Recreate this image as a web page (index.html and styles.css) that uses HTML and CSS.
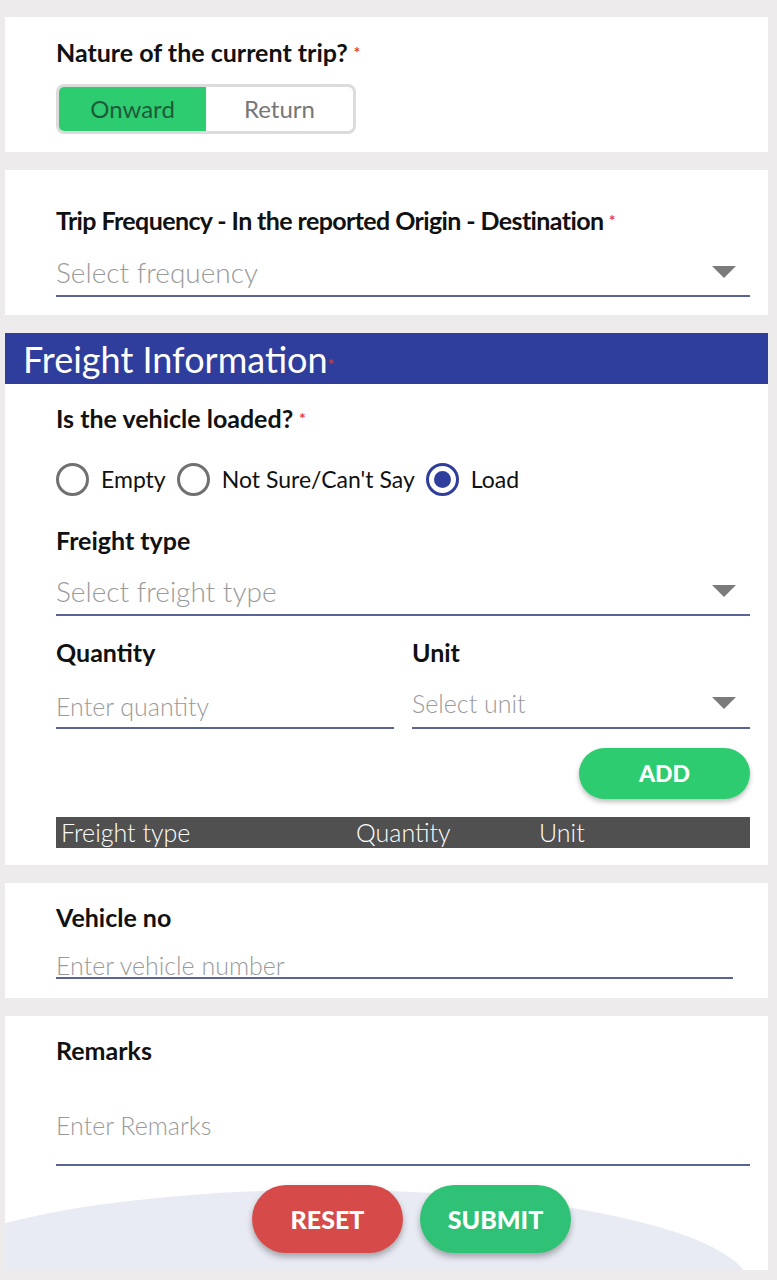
FILE: index.html
```html
<!DOCTYPE html>
<html lang="en">
<head>
    <meta charset="UTF-8">
    <title>Trip survey</title>
    <link rel="stylesheet" href="styles.css">
</head>
<body>
<div class="page">
    <div class="card trip">
        <div class="label">Nature of the current trip? <span class="req">*</span></div>
        <div class="toggle">
            <div class="opt on">Onward</div>
            <div class="opt">Return</div>
        </div>
    </div>

    <div class="card freq">
        <div class="label narrow">Trip Frequency - In the reported Origin - Destination <span class="req">*</span></div>
        <div class="field select">
            <span class="ph">Select frequency</span>
            <span class="caret"></span>
        </div>
    </div>

    <div class="card freight">
        <div class="head">Freight Information<span class="req">*</span></div>
        <div class="body">
            <div class="label">Is the vehicle loaded? <span class="req">*</span></div>
            <div class="radios">
                <div class="radio"><span class="dot"></span>Empty</div>
                <div class="radio"><span class="dot"></span>Not Sure/Can't Say</div>
                <div class="radio"><span class="dot checked"></span>Load</div>
            </div>
            <div class="label ftype">Freight type</div>
            <div class="field select">
                <span class="ph">Select freight type</span>
                <span class="caret"></span>
            </div>
            <div class="cols">
                <div class="col">
                    <div class="label">Quantity</div>
                    <div class="field small qty"><span class="ph">Enter quantity</span></div>
                </div>
                <div class="col">
                    <div class="label">Unit</div>
                    <div class="field small select unit">
                        <span class="ph">Select unit</span>
                        <span class="caret"></span>
                    </div>
                </div>
            </div>
            <div class="addrow"><div class="btn add">ADD</div></div>
            <div class="thead">
                <span class="c1">Freight type</span>
                <span class="c2">Quantity</span>
                <span class="c3">Unit</span>
            </div>
        </div>
    </div>

    <div class="card vehicle">
        <div class="label">Vehicle no</div>
        <div class="field short"><span class="ph">Enter vehicle number</span></div>
    </div>

    <div class="card remarks">
        <div class="wave"></div>
        <div class="label">Remarks</div>
        <div class="field tall"><span class="ph">Enter Remarks</span></div>
        <div class="actions">
            <div class="btn big reset">RESET</div>
            <div class="btn big submit">SUBMIT</div>
        </div>
    </div>
</div>
</body>
</html>
```

FILE: styles.css
```css
*{
    margin: 0;
    padding: 0;
    box-sizing: border-box;
}
body{
    background-color: #edebec;
    font-family: Lato, "Open Sans", sans-serif;
    color: #111;
}
.page{
    width: 763px;
    margin-left: 5px;
    padding-top: 17px;
    padding-bottom: 10px;
}
.card{
    background-color: #fff;
    margin-bottom: 18px;
    padding: 0 18px 0 51px;
}
.label{
    font-size: 25px;
    font-weight: bold;
    line-height: 30px;
    color: #111;
    white-space: nowrap;
}
.label.narrow{
    letter-spacing: -0.6px;
}
.req{
    color: #e53935;
    font-size: 15px;
    vertical-align: top;
}

/* trip nature */
.trip{
    height: 135px;
    padding-top: 20px;
}
.toggle{
    display: flex;
    width: 300px;
    height: 50px;
    margin-top: 17px;
    border: 3px solid #dcdcdc;
    border-radius: 8px;
    overflow: hidden;
}
.opt{
    flex: 1;
    text-align: center;
    line-height: 44px;
    font-size: 24px;
    color: #777;
}
.opt.on{
    background-color: #2ecc71;
    color: #1f5a38;
}

/* select / input fields */
.field{
    display: flex;
    align-items: center;
    justify-content: space-between;
    border-bottom: 2px solid #5a6498;
    font-size: 28px;
    font-weight: 300;
    color: #9a9a9a;
}
.caret{
    width: 0;
    height: 0;
    border-left: 12px solid transparent;
    border-right: 12px solid transparent;
    border-top: 12px solid #7b7b7b;
    margin-right: 14px;
}
.freq{
    height: 145px;
    padding-top: 35px;
}
.freq .field{
    height: 49px;
    margin-top: 13px;
}

/* freight */
.freight{
    padding: 0;
    height: 532px;
}
.head{
    height: 51px;
    background-color: #2f3d9c;
    color: #fff;
    font-size: 36px;
    line-height: 52px;
    padding-left: 18px;
}
.head .req{
    font-size: 16px;
    vertical-align: middle;
}
.body{
    padding: 19px 18px 0 51px;
}
.radios{
    display: flex;
    align-items: center;
    margin-top: 29px;
    height: 34px;
}
.radio{
    display: flex;
    align-items: center;
    font-size: 23px;
    margin-right: 11px;
    color: #111;
}
.dot{
    width: 33px;
    height: 33px;
    border-radius: 50%;
    border: 3px solid #707070;
    margin-right: 12px;
    position: relative;
}
.dot.checked{
    border-color: #2f3d9c;
}
.dot.checked::after{
    content: "";
    position: absolute;
    left: 5px;
    top: 5px;
    width: 17px;
    height: 17px;
    border-radius: 50%;
    background-color: #2f3d9c;
}
.ftype{
    margin-top: 29px;
}
.body > .field{
    height: 48px;
    margin-top: 13px;
}
.cols{
    display: flex;
    gap: 18px;
    margin-top: 21px;
}
.col{
    flex: 1;
}
.field.small{
    font-size: 25px;
    height: 50px;
    margin-top: 12px;
}
.field.qty .ph{
    margin-top: 6px;
}
.addrow{
    display: flex;
    justify-content: flex-end;
    margin-top: 19px;
}
.btn{
    color: #fff;
    font-weight: 900;
    text-align: center;
}
.btn.add{
    width: 171px;
    height: 51px;
    line-height: 51px;
    border-radius: 26px;
    background-color: #2ecc71;
    font-size: 23px;
    box-shadow: 0 3px 5px rgba(0,0,0,0.25);
}
.thead{
    display: flex;
    height: 31px;
    margin-top: 18px;
    background-color: #505050;
    color: #fff;
    font-size: 25px;
    line-height: 31px;
    font-weight: 300;
}
.c1{
    padding-left: 5px;
    width: 300px;
}
.c2{
    width: 183px;
}

/* vehicle no */
.vehicle{
    height: 115px;
    padding-top: 19px;
    padding-right: 35px;
}
.field.short{
    height: 30px;
    margin-top: 17px;
    font-size: 25px;
    line-height: 28px;
}
.field.short .ph{
    margin-top: 4px;
}

/* remarks */
.remarks{
    position: relative;
    overflow: hidden;
    height: 254px;
    padding-top: 19px;
    margin-bottom: 0;
}
.wave{
    position: absolute;
    left: -105px;
    top: 174px;
    width: 850px;
    height: 194px;
    border-radius: 50%;
    background-color: #e9ebf4;
}
.field.tall{
    position: relative;
    height: 101px;
    font-size: 25px;
}
.field.tall .ph{
    margin-top: 21px;
}
.actions{
    position: relative;
    display: flex;
    justify-content: center;
    gap: 17px;
    margin-top: 19px;
    margin-left: -51px;
    margin-right: -18px;
    padding-left: 50px;
}
.btn.big{
    width: 151px;
    height: 68px;
    line-height: 68px;
    border-radius: 34px;
    font-size: 25px;
    box-shadow: 0 4px 6px rgba(0,0,0,0.3);
}
.reset{
    background-color: #d64b4a;
}
.submit{
    background-color: #2fc276;
}
```
